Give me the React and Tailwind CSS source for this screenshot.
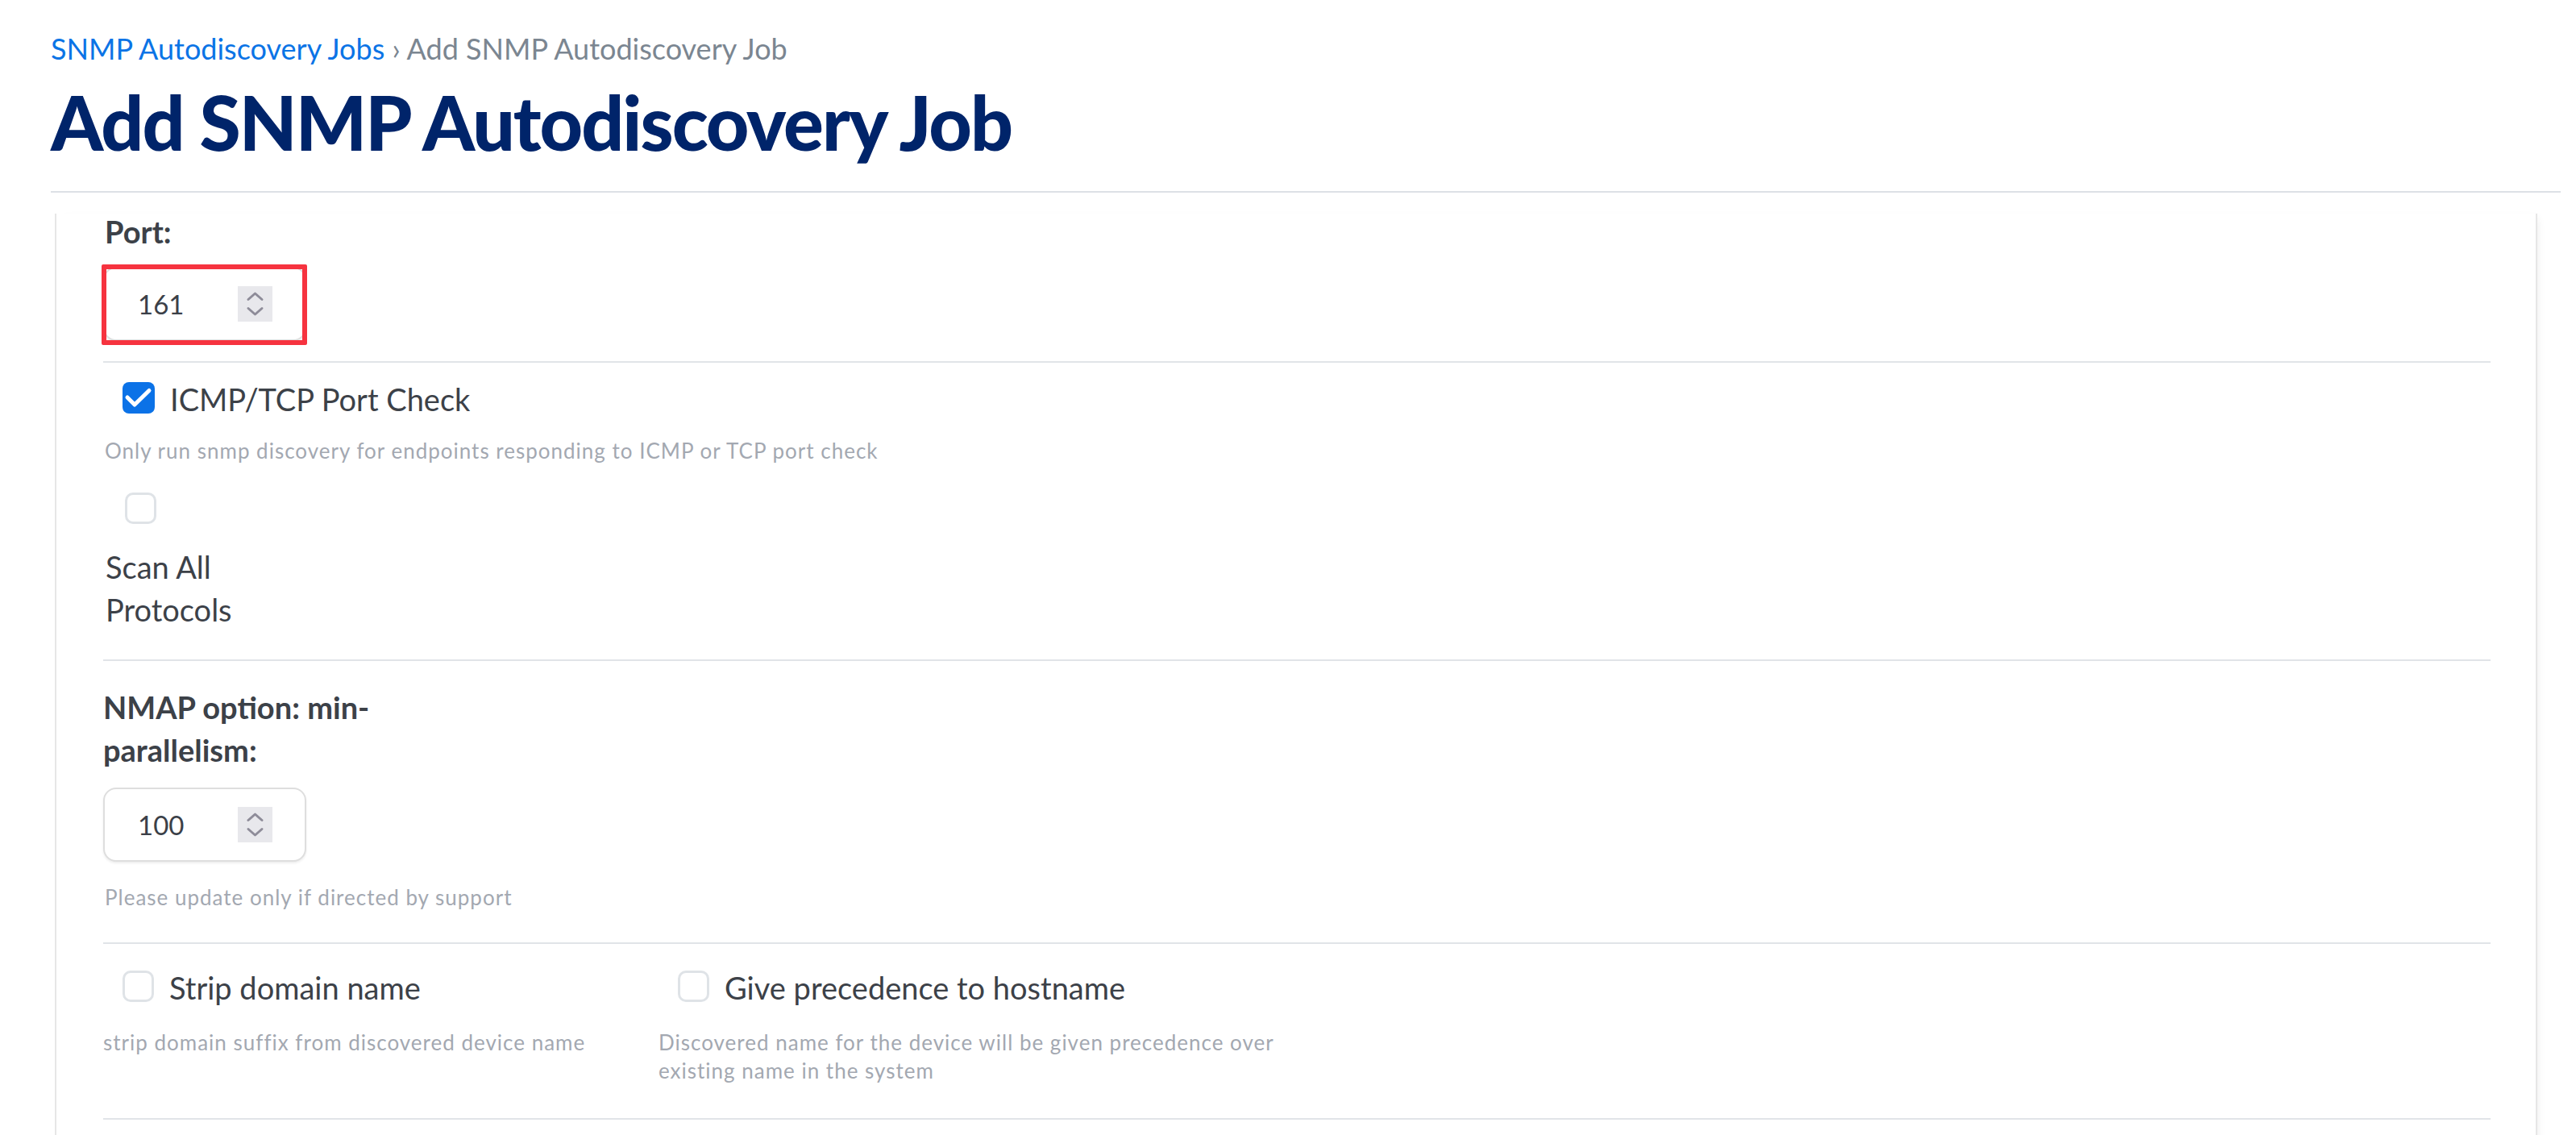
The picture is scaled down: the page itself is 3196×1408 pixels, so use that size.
import React from 'react';

// Add SNMP Autodiscovery Job form (scrolled view)

function Spinner() {
  return (
    <div className="h-[44px] w-[43px] bg-[#e8e8ec]">
      <svg width="43" height="44" viewBox="0 0 43 44" fill="none">
        <path d="M13 16.5 L21.5 9 L30 16.5" stroke="#8e8c99" strokeWidth="3" strokeLinecap="round" strokeLinejoin="round" />
        <path d="M13 27.5 L21.5 35 L30 27.5" stroke="#8e8c99" strokeWidth="3" strokeLinecap="round" strokeLinejoin="round" />
      </svg>
    </div>
  );
}

function NumberInput({ value }) {
  return (
    <div className="flex h-[92px] w-[252px] items-center justify-between rounded-[16px] border-2 border-[#dedede] bg-white pl-[41px] pr-[40px] shadow-[0_2px_3px_rgba(0,0,0,0.07)]">
      <span className="text-[33px] leading-none text-[#3b4048]">{value}</span>
      <Spinner />
    </div>
  );
}

function Checkbox({ checked }) {
  if (checked) {
    return (
      <div className="flex h-[39px] w-[40px] shrink-0 items-center justify-center rounded-[8px] bg-[#0b72e7]">
        <svg width="40" height="39" viewBox="0 0 40 39" fill="none">
          <path d="M6 19 L15 28 L33 10.5" stroke="white" strokeWidth="5" strokeLinecap="round" strokeLinejoin="round" />
        </svg>
      </div>
    );
  }
  return <div className="h-[39px] w-[39px] shrink-0 rounded-[10px] border-[3px] border-[#dfe3e7] bg-white" />;
}

function Divider() {
  return <div className="h-[2px] bg-[#e1e4e8]" />;
}

function CheckRow({ checked, label }) {
  return (
    <div className="flex h-[44px] items-center gap-[19px] pl-[24px]">
      <div className="-translate-y-[2px]">
        <Checkbox checked={checked} />
      </div>
      <span className="text-[38px] leading-[44px] text-[#3c4148]">{label}</span>
    </div>
  );
}

function Help({ children, className = '' }) {
  return (
    <p className={`text-[26px] tracking-[1px] text-[#a3a8b1] ${className}`}>{children}</p>
  );
}

export default function App() {
  return (
    <div className="min-h-screen bg-white [font-family:Lato,'Open_Sans',sans-serif]">
      <div className="pl-[63px] pr-[19px] pt-[38px]">
        <div className="text-[36px] leading-[44px]">
          <a className="text-[#0b74e6]">SNMP Autodiscovery Jobs</a>
          <span className="text-[#7b8691]"> › Add SNMP Autodiscovery Job</span>
        </div>
        <h1 className="mt-[14px] text-[93px] font-black leading-[110px] tracking-[-2px] text-[#00246a]">
          Add SNMP Autodiscovery Job
        </h1>
        <div className="mt-[31px] h-[2px] bg-[#dde1e6]" />
      </div>

      <div className="ml-[68px] mr-[48px] mt-[26px] border-x-2 border-[#e6e6e6] pb-[60px] pl-[58px] pr-[56px] shadow-[6px_0_10px_-6px_rgba(0,0,0,0.08)]">
        {/* Port */}
        <div className="pl-[2px] text-[38px] font-bold leading-[44px] text-[#3c4148]">Port:</div>
        <div className="relative mt-[22px] w-[252px]">
          <NumberInput value="161" />
          <div className="absolute -left-[2px] -top-[3px] h-[100px] w-[255px] rounded-[2px] border-[6px] border-[#f6333f]" />
        </div>
        <div className="mt-[25px]">
          <Divider />
        </div>

        {/* ICMP / scan all */}
        <div className="mt-[23px]">
          <CheckRow checked label="ICMP/TCP Port Check" />
        </div>
        <Help className="mt-[26px] pl-[2px] leading-[32px]">
          Only run snmp discovery for endpoints responding to ICMP or TCP port check
        </Help>
        <div className="mt-[36px] pl-[27px]">
          <Checkbox />
        </div>
        <div className="mt-[27px] w-[220px] pl-[3px] text-[38px] leading-[53px] text-[#3c4148]">
          Scan All Protocols
        </div>
        <div className="mt-[35px]">
          <Divider />
        </div>

        {/* NMAP */}
        <div className="mt-[31px] w-[370px] text-[38px] font-bold leading-[53px] text-[#3c4148]">
          NMAP option: min-parallelism:
        </div>
        <div className="mt-[20px]">
          <NumberInput value="100" />
        </div>
        <Help className="mt-[28px] pl-[2px] leading-[32px]">
          Please update only if directed by support
        </Help>
        <div className="mt-[40px]">
          <Divider />
        </div>

        {/* Strip / precedence */}
        <div className="mt-[32px] flex">
          <div className="w-[689px]">
            <CheckRow label="Strip domain name" />
            <Help className="mt-[29px] leading-[35px]">
              strip domain suffix from discovered device name
            </Help>
          </div>
          <div className="w-[800px]">
            <CheckRow label="Give precedence to hostname" />
            <Help className="mt-[29px] leading-[35px]">
              Discovered name for the device will be given precedence over existing name in the system
            </Help>
          </div>
        </div>
        <div className="mt-[41px]">
          <Divider />
        </div>
      </div>
    </div>
  );
}
